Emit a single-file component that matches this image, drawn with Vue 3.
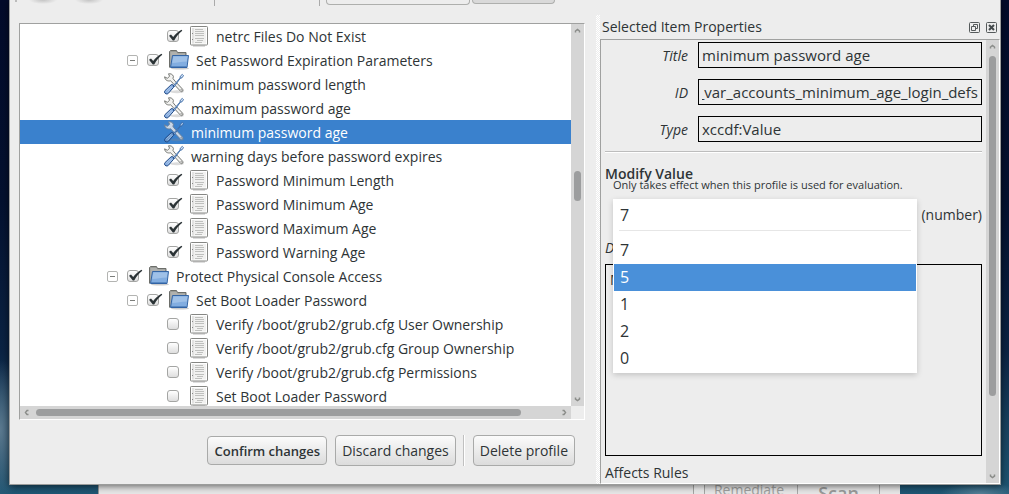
<script setup>
import { ref } from 'vue'

const rows = ref([
  { kind: 'rule', level: 3, checked: true, label: 'netrc Files Do Not Exist' },
  { kind: 'group', level: 2, checked: true, label: 'Set Password Expiration Parameters' },
  { kind: 'value', level: 3, label: 'minimum password length' },
  { kind: 'value', level: 3, label: 'maximum password age' },
  { kind: 'value', level: 3, label: 'minimum password age', selected: true },
  { kind: 'value', level: 3, label: 'warning days before password expires' },
  { kind: 'rule', level: 3, checked: true, label: 'Password Minimum Length' },
  { kind: 'rule', level: 3, checked: true, label: 'Password Minimum Age' },
  { kind: 'rule', level: 3, checked: true, label: 'Password Maximum Age' },
  { kind: 'rule', level: 3, checked: true, label: 'Password Warning Age' },
  { kind: 'group', level: 1, checked: true, label: 'Protect Physical Console Access' },
  { kind: 'group', level: 2, checked: true, label: 'Set Boot Loader Password' },
  { kind: 'rule', level: 3, checked: false, label: 'Verify /boot/grub2/grub.cfg User Ownership' },
  { kind: 'rule', level: 3, checked: false, label: 'Verify /boot/grub2/grub.cfg Group Ownership' },
  { kind: 'rule', level: 3, checked: false, label: 'Verify /boot/grub2/grub.cfg Permissions' },
  { kind: 'rule', level: 3, checked: false, label: 'Set Boot Loader Password' },
])

const title = ref('minimum password age')
const itemId = ref('xccdf_org.ssgproject.content_value_var_accounts_minimum_age_login_defs')
const type = ref('xccdf:Value')
const description = ref('Minimum age of password in days')
const value = ref('7')
const highlighted = ref('5')
const options = ['7', '5', '1', '2', '0']
</script>

<template>
  <div class="desktop">
    <main class="dialog">
      <section class="left">
        <div class="toolbar">
          <span class="handle"></span>
          <span class="tool"></span>
          <span class="tool"></span>
          <span class="tsep first"></span>
          <span class="tsep second"></span>
          <span class="tcombo"></span>
          <span class="tbutton"></span>
        </div>

        <div class="tree">
          <ul class="rows" role="tree">
            <li v-for="(row, i) in rows" :key="i" class="row" :class="['level' + row.level, { selected: row.selected }]" role="treeitem">
              <span class="twist">
                <button v-if="row.kind === 'group'" type="button" class="expander" aria-label="Collapse">
                  <svg width="11" height="11" viewBox="0 0 11 11"><rect x=".5" y=".5" width="10" height="10" rx="1.5" fill="#fff" stroke="#b3b4b2" /><path d="M3 5.5h5" stroke="#7c7e7b" /></svg>
                </button>
              </span>
              <span v-if="row.kind !== 'value'" class="check">
                <input :id="'row' + i" v-model="row.checked" type="checkbox" />
                <svg v-if="row.checked" class="tick" width="16" height="13" viewBox="0 0 16 13"><path d="M2 6.800 4 5.400 6.200 8C8.600 4.800 11 2.600 14.500.700L15.300 1.800C12 4.500 9.500 7.500 7.200 11.400L5.800 11.500Z" fill="#2b3336" /></svg>
              </span>

              <svg v-if="row.kind === 'rule'" class="icon" width="20" height="22" viewBox="0 0 20 22">
                <path d="M4 21h12" stroke="#bbb" stroke-width="1" />
                <rect x="1.500" y="1.500" width="17" height="18.500" rx=".8" fill="#fff" stroke="#858683" />
                <rect x="3" y="3" width="14" height="15.500" fill="#f1f1f0" />
                <path d="M3 3h2v15.500H3z" fill="#e2e2e1" />
                <path d="M6 4.500h8M6 6.500h9M6 8.500h9M6 10.500h9M6 13.500h9M8 15.500h6M6 17.500h7" stroke="#bfc0be" />
                <path d="M3 8.500h1M3 14.500h1" stroke="#888" />
              </svg>
              <svg v-else-if="row.kind === 'group'" class="icon" width="20" height="22" viewBox="0 0 20 22">
                <ellipse cx="11" cy="19.500" rx="9" ry="1" fill="#ccc" />
                <path d="M.5 18.500v-16l1-1h6l1 2h8.500v4" fill="#9a9c98" stroke="#6c6e6a" />
                <path d="M1.500 3h6l1 1.500H16V7H4L2.500 17h-1z" fill="#b0b1ae" />
                <path d="M3.500 6.500h16l-1.500 12H1.500z" fill="#82ade0" stroke="#3465a4" />
                <path d="M4.400 7.500h14l-.6 5C12 12.500 8 14 3.300 14z" fill="#9fc1e8" />
                <path d="M2 18h15.500" stroke="#2f62a5" />
              </svg>
              <svg v-else class="icon" width="20" height="22" viewBox="0 0 20 22">
                <ellipse cx="13" cy="18.800" rx="7" ry="1.500" fill="#888" opacity=".3" />
                <path d="M4.500.800C6.200.500 8.500 1 9.400 3.300L9 5.600l2 2.500 7.700 8.200c1.100 1.300-.8 3.200-2.100 2L9 10.200 6.500 7.800C4 8.400 1 7.500.6 3.800l2.700 1.500 2.300-2z" :fill="row.selected ? '#c9d7e7' : '#f2f2f0'" :stroke="row.selected ? '#6b8099' : '#777975'" />
                <path d="M17.200 16.600l.5.600" stroke="#555" stroke-linecap="round" />
                <path d="M9 13 16 5.200l.3-2 2-1.800 1.200 1.200-1.500 2.200-1.700.4L10 14z" :fill="row.selected ? '#a6c4e6' : '#d8e5f5'" stroke="#3465a4" stroke-width=".9" />
                <path d="M.9 17.700 7 11.900c1.300-1.100 3.600.8 2.600 2.300L4.400 20.300c-2 2-5.100-.7-3.500-2.600z" :fill="row.selected ? '#5f8fc7' : '#86ade0'" stroke="#204a87" />
                <path d="M2.300 17.900 7.500 13M3.600 19.200l4.900-5.200" stroke="#c5d9f2" stroke-width=".7" />
              </svg>

              <label v-if="row.kind !== 'value'" class="name" :for="'row' + i">{{ row.label }}</label>
              <span v-else class="name">{{ row.label }}</span>
            </li>
          </ul>
          <div class="vbar">
            <svg class="arrow" width="7" height="7" viewBox="0 0 7 7"><path d="M1.500 5.500V4L3.500 2.500 5.500 4v1.500" fill="none" stroke="#8b8d8a" stroke-width="1.500" /></svg>
            <span class="thumb tree-thumb"></span>
            <svg class="arrow" width="7" height="7" viewBox="0 0 7 7"><path d="M1.500 1.500V3L3.500 4.500 5.500 3V1.500" fill="none" stroke="#8b8d8a" stroke-width="1.500" /></svg>
          </div>
          <div class="hbar">
            <svg class="arrow" width="7" height="7" viewBox="0 0 7 7"><path d="M5.500 1.500H4L2.500 3.500 4 5.500h1.500" fill="none" stroke="#8b8d8a" stroke-width="1.500" /></svg>
            <span class="hthumb"></span>
            <svg class="arrow" width="7" height="7" viewBox="0 0 7 7"><path d="M1.500 1.500H3L4.500 3.500 3 5.500H1.500" fill="none" stroke="#8b8d8a" stroke-width="1.500" /></svg>
          </div>
        </div>

        <div class="actions">
          <button type="button" class="push default">Confirm changes</button>
          <button type="button" class="push">Discard changes</button>
          <span class="divider"></span>
          <button type="button" class="push">Delete profile</button>
        </div>
      </section>

      <div class="splitter"></div>

      <aside class="dock">
        <header class="dock-title">
          <h2>Selected Item Properties</h2>
          <button type="button" class="mini" aria-label="Float">
            <svg width="11" height="11" viewBox="0 0 11 11"><rect x=".5" y=".5" width="10" height="10" rx="1" fill="none" stroke="#555a5b" /><path d="M4.500 4.500v-2h4v4h-2M2.500 4.500h4v4h-4z" fill="none" stroke="#555a5b" /></svg>
          </button>
          <button type="button" class="mini" aria-label="Close">
            <svg width="11" height="11" viewBox="0 0 11 11"><rect x=".5" y=".5" width="10" height="10" rx="1" fill="none" stroke="#555a5b" /><path d="M3 3l5 5M8 3l-5 5" stroke="#444a4c" stroke-width="2" /></svg>
          </button>
        </header>
        <div class="scroll">
          <form class="props" @submit.prevent>
            <div class="fields">
              <label for="f-title">Title</label>
              <input id="f-title" v-model="title" type="text" />
              <label for="f-id">ID</label>
              <input id="f-id" v-model="itemId" class="from-end" type="text" />
              <label for="f-type">Type</label>
              <input id="f-type" v-model="type" type="text" />
            </div>
            <hr />
            <h3>Modify Value</h3>
            <p class="hint">Only takes effect when this profile is used for evaluation.</p>
            <div class="value-line">
              <div class="combo">
                <div class="popup">
                  <select v-model="value" aria-label="Value">
                    <option v-for="o in options" :key="o">{{ o }}</option>
                  </select>
                  <ul role="listbox" aria-label="Values">
                    <li v-for="o in options" :key="o" role="option" :class="{ hot: o === highlighted }">{{ o }}</li>
                  </ul>
                </div>
              </div>
              <span class="unit">(number)</span>
            </div>
            <label class="desc-label" for="f-desc">Description</label>
            <textarea id="f-desc" v-model="description"></textarea>
            <h4>Affects Rules</h4>
          </form>
          <div class="vbar">
            <svg class="arrow" width="7" height="7" viewBox="0 0 7 7"><path d="M1.500 5.500V4L3.500 2.500 5.500 4v1.500" fill="none" stroke="#8b8d8a" stroke-width="1.500" /></svg>
            <span class="thumb dock-thumb"></span>
            <svg class="arrow" width="7" height="7" viewBox="0 0 7 7"><path d="M1.500 1.500V3L3.500 4.500 5.500 3V1.500" fill="none" stroke="#8b8d8a" stroke-width="1.500" /></svg>
          </div>
        </div>
      </aside>
    </main>

    <footer class="behind">
      <label class="remediate"><input type="checkbox" disabled /><span>Remediate</span></label>
      <button type="button" class="scan" disabled>Scan</button>
    </footer>
  </div>
</template>

<style>
body {
  background: #04102c;
}
</style>

<style scoped>
* {
  box-sizing: border-box;
}
.desktop {
  display: flex;
  flex-direction: column;
  height: 100vh;
  padding: 0 8px 0 9px;
  overflow: hidden;
  color: #2e3436;
  font: 14px/20px "Open Sans", "Noto Sans", sans-serif;
  background:
    radial-gradient(ellipse 30px 70px at 0 430px, #5c7a90, transparent),
    radial-gradient(ellipse 40px 12px at 980px 494px, #557f96, transparent),
    linear-gradient(#030b2a 0, #04112f 200px, #0b2343 350px, #173f5c 420px, #1f5673 494px);
}
.dialog {
  position: relative;
  display: flex;
  flex: 1;
  min-height: 0;
  background: #ededed;
  border: 1px solid #9b9c9b;
  border-top: 0;
  box-shadow: 0 1px 7px rgba(0, 0, 0, 0.6);
}
.left {
  display: flex;
  flex: 1;
  flex-direction: column;
  min-width: 0;
  padding: 0 11px 18px 9px;
}
.toolbar {
  display: flex;
  flex: none;
  align-items: flex-start;
  height: 23px;
}
.handle {
  width: 2px;
  height: 2px;
  margin-left: -4px;
  background: #bcbcbc;
}
.tool {
  width: 28px;
  height: 4px;
  margin-left: 12px;
  background: radial-gradient(ellipse 14px 4px at 50% 0, #c4c4c4, transparent);
}
.tool + .tool {
  margin-left: 18px;
}
.tsep {
  width: 1px;
  height: 6px;
  background: #aaa;
}
.tsep.first {
  margin-left: 111px;
}
.tsep.second {
  margin-left: 104px;
}
.tcombo,
.tbutton {
  width: 144px;
  height: 5px;
  margin-left: 6px;
  border: 1px solid #aeafad;
  border-top: 0;
  border-radius: 0 0 4px 4px;
}
.tbutton {
  width: 83px;
  height: 4px;
  margin-left: 2px;
  background: #d9d9d9;
}
.tree {
  display: grid;
  flex: 1;
  grid-template: minmax(0, 1fr) 13px / minmax(0, 1fr) 13px;
  min-height: 0;
  border: 1px solid #fff;
  border-top-color: #a0a1a0;
  border-left-color: #a0a1a0;
}
ul {
  margin: 0;
  padding: 0;
  list-style: none;
}
.rows {
  overflow: hidden;
  background: #fff;
}
.row {
  display: flex;
  align-items: center;
  height: 24px;
  white-space: nowrap;
}
.name {
  padding-top: 2px;
}
.level1 {
  padding-left: 87px;
}
.level2 {
  padding-left: 107px;
}
.level3 {
  padding-left: 127px;
}
.selected {
  color: #fff;
  background: #3a81cd;
}
.twist {
  display: flex;
  flex: none;
  width: 17px;
}
.expander,
.mini {
  display: flex;
  padding: 0;
  background: none;
  border: 0;
}
.check {
  position: relative;
  display: flex;
  margin: 0 9px 0 3px;
}
.check input,
.remediate input {
  width: 12px;
  height: 12px;
  margin: 0 1px 0 0;
  background: linear-gradient(#fff, #dedede);
  border: 1px solid #a4a5a3;
  border-radius: 3px;
  appearance: none;
}
.tick {
  position: absolute;
  top: -1px;
  left: 0;
}
.icon {
  flex: none;
  margin-right: 7px;
}
.vbar,
.hbar {
  display: flex;
  flex-direction: column;
  align-items: center;
  justify-content: space-between;
  padding: 3px 0;
  background: #d5d5d5;
}
.hbar {
  flex-direction: row;
  padding: 0 3px;
}
.arrow {
  flex: none;
}
.thumb {
  width: 7px;
  background: #9c9d9e;
  border-radius: 4px;
}
.tree-thumb {
  height: 30px;
  margin-bottom: 59px;
}
.hthumb {
  flex: 1;
  height: 7px;
  margin: 0 40px 0 6px;
  background: #9c9d9e;
  border-radius: 4px;
}
.actions {
  display: flex;
  align-items: center;
  justify-content: flex-end;
  margin-top: 15px;
  padding-right: 10px;
}
.push {
  height: 31px;
  padding: 0 6px;
  color: inherit;
  font: inherit;
  white-space: nowrap;
  background: linear-gradient(#fbfbfb, #dcdcdc);
  border: 1px solid #a9aaa9;
  border-radius: 4px;
}
.default {
  height: 29px;
  margin-right: 8px;
  font-size: 13px;
  font-weight: 600;
}
.divider {
  width: 2px;
  height: 31px;
  margin: 0 8px 0 7px;
  background: #fff;
  border-left: 1px solid #c0c0c0;
}
.splitter {
  width: 4px;
  margin-top: 15px;
  background: conic-gradient(#fff 25%, transparent 0 50%, #fff 0 75%, transparent 0) 0 0 / 2px 2px;
}
.dock {
  display: flex;
  flex: 0 0 400px;
  flex-direction: column;
  min-width: 0;
}
.dock-title {
  display: flex;
  flex: none;
  gap: 6px;
  align-items: center;
  height: 24px;
  margin-top: 15px;
  padding: 0 3px 0 2px;
}
h2,
h3,
h4,
.hint {
  margin: 0;
  font-size: 14px;
  font-weight: 400;
}
h2 {
  flex: 1;
}
.scroll {
  display: flex;
  flex: 1;
  min-height: 0;
  border: 1px solid #fff;
  border-top-color: #a0a1a0;
  border-left-color: #a0a1a0;
}
.scroll .vbar {
  justify-content: flex-start;
  width: 13px;
}
.dock-thumb {
  flex: 1;
  margin: 6px 0 77px;
}
.props {
  display: flex;
  flex: 1;
  flex-direction: column;
  min-width: 0;
  padding: 2px 4px 0;
}
.fields {
  display: grid;
  grid-template-columns: 83px 1fr;
  row-gap: 11px;
  column-gap: 10px;
  align-items: center;
}
.fields label {
  padding-top: 2px;
  font-style: italic;
  text-align: right;
}
.fields input,
textarea {
  width: 100%;
  height: 26px;
  padding: 0 3px;
  color: inherit;
  font: 15px/22px "Open Sans", "Noto Sans", sans-serif;
  background: #ededed;
  border: 1px solid #000;
  border-radius: 0;
}
.fields .from-end {
  direction: rtl;
}
hr {
  width: 100%;
  height: 2px;
  margin: 9px 0 12px;
  background: #fff;
  border: 0;
  border-top: 1px solid #bdbdbd;
}
h3 {
  height: 12px;
  line-height: 18px;
  font-weight: 600;
}
.hint {
  padding-left: 8px;
  font-size: 11px;
  line-height: 16px;
}
.value-line {
  display: flex;
  gap: 4px;
  align-items: center;
  height: 31px;
  margin: 6px 0 8px;
  padding-left: 8px;
}
.combo {
  position: relative;
  flex: 1;
  align-self: stretch;
}
.popup {
  position: absolute;
  z-index: 1;
  top: 0;
  right: 0;
  left: 0;
  padding: 0 1px 1px;
  background: #fff;
  box-shadow: 0 2px 6px rgba(0, 0, 0, 0.18);
}
.popup select {
  display: block;
  width: calc(100% - 10px);
  height: 32px;
  margin: 0 5px 6px;
  padding: 0 1px;
  color: inherit;
  font: 16px/26px "Open Sans", "Noto Sans", sans-serif;
  background: #fff;
  border: 0;
  border-bottom: 1px solid #e6e6e6;
  appearance: none;
}
.popup li {
  height: 27px;
  padding-left: 6px;
  font-size: 16px;
  line-height: 27px;
}
.popup .hot {
  color: #fff;
  background: #4a90d9;
}
.desc-label {
  margin-bottom: 6px;
  font-style: italic;
}
textarea {
  height: 192px;
  padding: 4px;
  font-size: 14px;
  resize: none;
}
h4 {
  margin-top: 7px;
}
.behind {
  display: flex;
  flex: none;
  justify-content: flex-end;
  height: 9px;
  margin: 0 101px 0 89px;
  padding-right: 20px;
  overflow: hidden;
  color: #a0a1a0;
  background: #e6e6e6;
  border-left: 1px solid #999;
}
.remediate {
  display: flex;
  align-items: flex-start;
  padding: 0 13px 0 0;
}
.remediate input {
  height: 17px;
  margin-top: -4px;
}
.remediate span {
  margin: -5px 0 0 8px;
}
.scan {
  width: 83px;
  height: 16px;
  padding: 0;
  color: #9a9b9a;
  font: 600 18px/14px "Open Sans", "Noto Sans", sans-serif;
  background: none;
  border: 1px solid #a8a8a8;
  border-width: 0 1px;
}
</style>
